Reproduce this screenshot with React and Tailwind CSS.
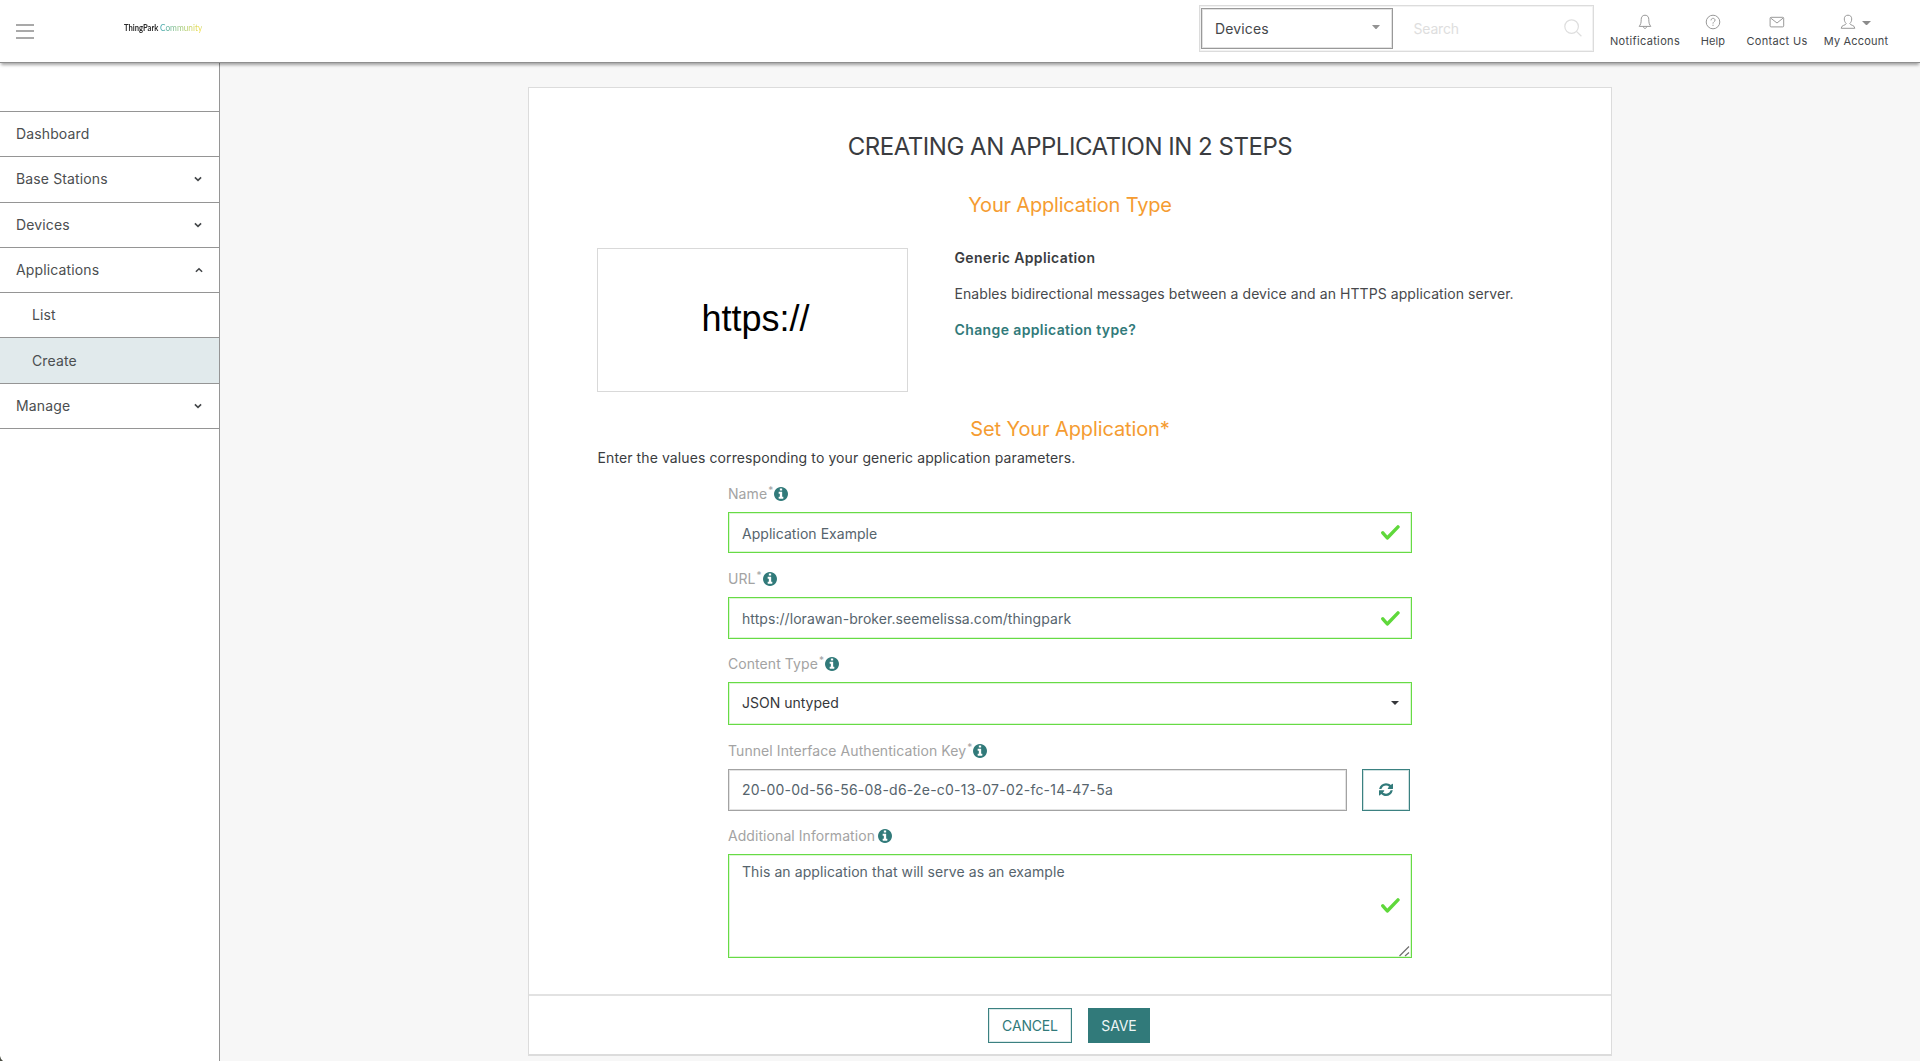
import React from "react";

const INFO_PATH =
  "M1024 1248v-160q0-14-9-23t-23-9h-96v-512q0-14-9-23t-23-9h-320q-14 0-23 9t-9 23v160q0 14 9 23t23 9h96v320h-96q-14 0-23 9t-9 23v160q0 14 9 23t23 9h448q14 0 23-9t9-23zM896 352v-160q0-14-9-23t-23-9h-192q-14 0-23 9t-9 23v160q0 14 9 23t23 9h192q14 0 23-9t9-23zM1536 768q0 209-103 385.5t-279.5 279.5-385.5 103-385.5-103-279.5-279.5-103-385.5 103-385.5 279.5-279.5 385.5-103 385.5 103 279.5 279.5 103 385.5z";
const REFRESH_PATH =
  "M1511 928q0 5-1 7-64 268-268 434.5t-478 166.5q-146 0-282.5-55t-243.5-157l-129 129q-19 19-45 19t-45-19-19-45v-448q0-26 19-45t45-19h448q26 0 45 19t19 45-19 45l-137 137q71 66 161 102t187 36q134 0 250-65t186-179q11-17 53-117 8-23 30-23h192q13 0 22.5 9.5t9.5 22.5zM1536 256v448q0 26-19 45t-45 19h-448q-26 0-45-19t-19-45 19-45l138-138q-148-137-349-137-134 0-250 65t-186 179q-11 17-53 117-8 23-30 23h-199q-13 0-22.5-9.5t-9.5-22.5v-7q65-268 270-434.5t480-166.5q146 0 284 55.5t245 156.5l130-129q19-19 45-19t45 19 19 45z";

const InfoIcon = () => (
  <svg viewBox="0 0 1536 1536" className="-mt-px size-[14px] fill-[#317a7a]">
    <path d={INFO_PATH} />
  </svg>
);

const CheckMark = () => (
  <svg viewBox="0 0 20 17" className="h-[17px] w-5 shrink-0" fill="none" stroke="#5fd83b" strokeWidth="3.4">
    <path d="M2.8 8.8 L7.3 14 L18 2.9" strokeLinecap="round" strokeLinejoin="round" />
  </svg>
);

const Chevron = ({ up }) => (
  <svg viewBox="0 0 8 6" className={up ? "-mr-px h-[6px] w-2" : "h-[6px] w-2"} fill="none" stroke="#44474a" strokeWidth="1.6">
    <path d={up ? "M0.9 4.8 L4 1.8 L7.1 4.8" : "M0.9 1.4 L4 4.4 L7.1 1.4"} />
  </svg>
);

const Caret = ({ className }) => (
  <svg viewBox="0 0 8 4" preserveAspectRatio="none" className={className}>
    <path d="M0 0H8L4 4Z" />
  </svg>
);

function SideRow({ label, arrow, sub, active }) {
  return (
    <div
      className={
        "flex h-[45.3px] items-center justify-between border-b border-[#959595] pr-[17px] " +
        (sub ? "pl-8 " : "pl-4 ") +
        (active ? "bg-[#e1eaec]" : "")
      }
    >
      <span className="tracking-[0.13px]">{label}</span>
      {arrow && <Chevron up={arrow === "up"} />}
    </div>
  );
}

function Label({ children, required }) {
  return (
    <div className="mb-2 flex h-5 items-center text-[#a3a3a3]">
      <span className="tracking-[0.07px]">{children}</span>
      {required && <span className="relative -top-[4px] ml-px w-[6px] text-[10px] leading-none">*</span>}
      <span className={required ? "" : "ml-[2.5px]"}>
        <InfoIcon />
      </span>
    </div>
  );
}

const GREEN = "border border-[#67db45] shadow-[inset_0_0_0_1px_#dcf7d4] ";

function NavItem({ label, tracking, className, children }) {
  return (
    <div className={"flex flex-col items-center " + className}>
      <div className="flex h-[16px] items-center">{children}</div>
      <span className={"mt-[3px] text-[11px] leading-4 whitespace-nowrap text-[#44474a] " + tracking}>{label}</span>
    </div>
  );
}

function Header() {
  return (
    <header className="relative z-10 flex h-[63px] items-start border-b border-[#8f8f8f] bg-white shadow-[0_3px_3px_-1px_rgba(0,0,0,0.35)]">
      <div className="mt-[24px] ml-4 flex w-[18px] flex-col gap-[4.4px]">
        <span className="h-[2px] bg-[#a9a9a9]" />
        <span className="h-[2px] bg-[#a9a9a9]" />
        <span className="h-[2px] bg-[#a9a9a9]" />
      </div>
      <div className="mt-[21px] ml-[90px] flex h-[14px] w-20 font-[Lato,sans-serif] text-[9.5px] leading-[14px]">
        <div className="w-[35.5px]">
          <span className="inline-block origin-left scale-x-[0.8] font-bold text-[#2b2b2b]">ThingPark</span>
        </div>
        <div className="w-[43px]">
          <span className="inline-block origin-left scale-x-[0.87] bg-linear-to-r from-[#35a3ae] via-[#9cc878] to-[#f5df3c] bg-clip-text text-transparent">
            Community
          </span>
        </div>
      </div>
      <div className="mt-[5px] ml-[995px] flex h-[47px] w-[395px] items-center border-[1.5px] border-[#dcdcdc] shadow-[inset_0_0_0_1px_#f2f2f2]">
        <div className="ml-px flex h-[41px] w-[192px] items-center justify-between border border-[#999] pr-[12px] pl-[13px] text-[#44474a] shadow-[inset_0_0_0_1px_#e2e2e2]">
          <span className="tracking-[0.15px]">Devices</span>
          <Caret className="-mt-[3px] h-[4.5px] w-2 fill-[#939393]" />
        </div>
        <span className="ml-[20.5px] tracking-[-0.2px] text-[#dedede]">Search</span>
        <svg viewBox="0 0 18 18" className="-mt-px mr-[11px] ml-auto size-[18px]" fill="none" stroke="#dedede" strokeWidth="1.2">
          <circle cx="7.6" cy="7.6" r="6.8" />
          <path d="M12.4 12.4L17.4 17.2" />
        </svg>
      </div>
      <nav className="mt-[14px] ml-[16px] flex">
        <NavItem label="Notifications" tracking="tracking-[0.35px]" className="w-[70px]">
          <svg viewBox="0 0 14 16" className="h-4 w-[14px]" fill="none" stroke="#999" strokeWidth="1">
            <path d="M7 1.2C4.2 1.2 3.2 3.2 3.2 5.6C3.2 9 2.6 10.6 1.2 12.4H12.8C11.4 10.6 10.8 9 10.8 5.6C10.8 3.2 9.8 1.2 7 1.2Z" strokeLinejoin="round" />
            <path d="M5.4 12.6C5.5 15 8.5 15 8.6 12.6" />
          </svg>
        </NavItem>
        <NavItem label="Help" tracking="tracking-[0.1px]" className="ml-5 w-[26px]">
          <svg viewBox="0 0 16 16" className="size-4" fill="none" stroke="#999" strokeWidth="1">
            <circle cx="8" cy="8" r="6.8" />
            <path d="M6 6.4C6 3.7 10 3.7 10 6.2C10 7.8 8 7.7 8 9.6M8 10.7V11.9" />
          </svg>
        </NavItem>
        <NavItem label="Contact Us" tracking="tracking-[0.33px]" className="ml-[20px] w-[62px]">
          <svg viewBox="0 0 16 16" className="size-4" fill="none" stroke="#999" strokeWidth="1">
            <rect x="1.1" y="3.3" width="13.6" height="9.6" rx="1" />
            <path d="M1.6 4L8 9L14.2 4" />
          </svg>
        </NavItem>
        <NavItem label="My Account" tracking="tracking-[0.2px]" className="ml-[15px] w-[66px]">
          <svg viewBox="0 0 16 16" className="-ml-[2px] size-4" fill="none" stroke="#999" strokeWidth="1">
            <path d="M6.2 9.4C4.9 8.3 4.3 6.8 4.3 4.9C4.3 2.5 5.8 1.2 8 1.2C10.2 1.2 11.7 2.5 11.7 4.9C11.7 6.8 11.1 8.3 9.8 9.4C9.8 11.6 14.8 10.7 14.8 14.3H1.2C1.2 10.7 6.2 11.6 6.2 9.4Z" strokeLinejoin="round" />
          </svg>
          <Caret className="mt-[2px] ml-[6px] h-[4.5px] w-[9px] fill-[#8b8b8b]" />
        </NavItem>
      </nav>
    </header>
  );
}

export default function App() {
  return (
    <div className="relative flex h-[1061px] w-[1920px] flex-col overflow-hidden bg-[#f7f7f7] font-[Inter,sans-serif] text-[14px] leading-5 text-[#3a3c40]">
      <Header />
      <div className="flex flex-1">
        <aside className="w-[220px] border-r border-[#959595] bg-white text-[#4b4e50]">
          <div className="h-[49px] border-b border-[#959595]" />
          <SideRow label="Dashboard" />
          <SideRow label="Base Stations" arrow="down" />
          <SideRow label="Devices" arrow="down" />
          <SideRow label="Applications" arrow="up" />
          <SideRow label="List" sub />
          <SideRow label="Create" sub active />
          <SideRow label="Manage" arrow="down" />
        </aside>

        <main className="mt-6 ml-[308px] flex h-[969px] w-[1084px] flex-col border border-b-2 border-[#dcdcdc] bg-white">
          <div className="flex h-[906px] flex-col px-[68px] pt-[43px]">
            <h1 className="text-center text-[24px] leading-8 tracking-[-0.477px]">CREATING AN APPLICATION IN 2 STEPS</h1>
            <h2 className="mt-[28px] text-center text-[20px] leading-7 tracking-[-0.19px] text-[#f59c31]">Your Application Type</h2>
            <div className="mt-[29px] flex">
              <div className="flex h-[144px] w-[311px] items-center justify-center border border-[#d9d9d9] pb-[3px] pl-[6px] font-['Liberation_Sans',Arial,sans-serif] text-[36px] text-black">
                https://
              </div>
              <div className="ml-[46.5px] flex flex-col gap-4">
                <p className="font-semibold tracking-[0.38px]">Generic Application</p>
                <p className="tracking-[0.07px] text-[#47494c]">
                  Enables bidirectional messages between a device and an HTTPS application server.
                </p>
                <a className="font-semibold tracking-[0.38px] text-[#317a7a]">Change application type?</a>
              </div>
            </div>
            <h2 className="mt-[23px] text-center text-[20px] leading-7 tracking-[-0.11px] text-[#f59c31]">Set Your Application*</h2>
            <p className="mt-[5px] ml-[0.5px] tracking-[0.1px]">Enter the values corresponding to your generic application parameters.</p>

            <form className="mt-4 ml-[131px] w-[684px] text-[#56646d]">
              <div className="h-[85px]">
                <Label required>Name</Label>
                <div className={GREEN + "flex h-[41px] items-center justify-between pr-[11px] pl-[13px]"}>
                  <span className="mt-[2px] tracking-[0.04px]">Application Example</span>
                  <CheckMark />
                </div>
              </div>
              <div className="h-[85px]">
                <Label required>URL</Label>
                <div className={GREEN + "flex h-[42px] items-center justify-between pr-[11px] pl-[13px]"}>
                  <span className="mt-px tracking-[0.064px]">https://lorawan-broker.seemelissa.com/thingpark</span>
                  <CheckMark />
                </div>
              </div>
              <div className="h-[87px]">
                <Label required>Content Type</Label>
                <div className={GREEN + "flex h-[43px] items-center justify-between pr-[12px] pl-[13px] text-[#35373a]"}>
                  <span className="-mt-px">JSON untyped</span>
                  <Caret className="-mt-px h-[4px] w-2 fill-[#35373a]" />
                </div>
              </div>
              <div className="h-[85px]">
                <Label required>Tunnel Interface Authentication Key</Label>
                <div className="flex gap-[15px]">
                  <div className="flex h-[42px] w-[619px] items-center border border-[#a3a3a3] pl-[13px] shadow-[inset_0_0_0_1px_#e3e3e3]">
                    <span className="-mt-px tracking-[0.23px]">20-00-0d-56-56-08-d6-2e-c0-13-07-02-fc-14-47-5a</span>
                  </div>
                  <div className="flex h-[42px] w-[47.5px] items-center justify-center border border-[#3b8181] shadow-[inset_0_0_0_1px_#cfe1e1]">
                    <svg viewBox="0 0 1536 1536" className="-mt-[3px] size-[14px] fill-[#317a7a]">
                      <path d={REFRESH_PATH} />
                    </svg>
                  </div>
                </div>
              </div>
              <div>
                <Label>Additional Information</Label>
                <div className={GREEN + "relative flex h-[104px] justify-between pt-[7px] pr-[11px] pl-[13px]"}>
                  <span className="tracking-[0.076px]">This an application that will serve as an example</span>
                  <div className="mt-[35px]">
                    <CheckMark />
                  </div>
                  <svg viewBox="0 0 12 12" className="absolute right-px bottom-0 size-3" stroke="#6f6f6f" strokeWidth="1.2">
                    <path d="M1.5 11L11 1.5M7 11L11 7.5" />
                  </svg>
                </div>
              </div>
            </form>
          </div>
          <footer className="flex flex-1 justify-center gap-4 border-t-2 border-[#e2e2e2] pt-[12px] pr-[2px]">
            <button className="h-[35px] w-[84px] border border-[#3b8181] tracking-[-0.16px] text-[#317a7a] shadow-[inset_0_0_0_1px_#dbe9e9]">
              CANCEL
            </button>
            <button className="h-[35px] w-[62px] bg-[#317a7a] tracking-[-0.115px] text-[#eef5f5]">SAVE</button>
          </footer>
        </main>
      </div>
      <svg viewBox="0 0 4 5" className="absolute bottom-0 left-0 h-[5px] w-1 fill-[#4d4f45]">
        <path d="M0 0Q0.6 3.4 3 5H0Z" />
      </svg>
    </div>
  );
}
